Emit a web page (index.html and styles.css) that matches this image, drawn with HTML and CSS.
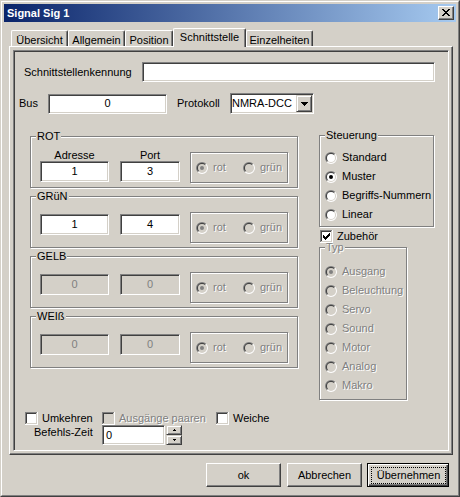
FILE: index.html
```html
<!DOCTYPE html>
<html lang="de">
<head>
<meta charset="utf-8">
<title>Signal Sig 1</title>
<link rel="stylesheet" href="styles.css">
</head>
<body>
<svg class="defs" width="0" height="0" aria-hidden="true">
  <defs>
    <symbol id="rb" viewBox="0 0 12 12">
      <path d="M1.757 10.243A6 6 0 0 1 10.243 1.757Z" fill="#808080"/>
      <path d="M10.243 1.757A6 6 0 0 1 1.757 10.243Z" fill="#ffffff"/>
      <path d="M2.464 9.536A5 5 0 0 1 9.536 2.464Z" fill="#404040"/>
      <path d="M9.536 2.464A5 5 0 0 1 2.464 9.536Z" fill="#d4d0c8"/>
      <circle cx="6" cy="6" r="4" fill="#ffffff"/>
    </symbol>
    <symbol id="rbd" viewBox="0 0 12 12">
      <path d="M1.757 10.243A6 6 0 0 1 10.243 1.757Z" fill="#808080"/>
      <path d="M10.243 1.757A6 6 0 0 1 1.757 10.243Z" fill="#ffffff"/>
      <path d="M2.464 9.536A5 5 0 0 1 9.536 2.464Z" fill="#404040"/>
      <path d="M9.536 2.464A5 5 0 0 1 2.464 9.536Z" fill="#d4d0c8"/>
      <circle cx="6" cy="6" r="4" fill="#d4d0c8"/>
    </symbol>
    <symbol id="cbx" viewBox="0 0 13 13">
      <rect width="13" height="13" fill="#ffffff"/>
      <path d="M0 0h12v1H1v11H0z" fill="#808080"/>
      <path d="M1 1h10v1H2v9H1z" fill="#404040"/>
      <path d="M11 1h1v11H1v-1h10z" fill="#d4d0c8"/>
      <rect x="2" y="2" width="9" height="9" fill="#ffffff"/>
    </symbol>
    <symbol id="cbxd" viewBox="0 0 13 13">
      <rect width="13" height="13" fill="#ffffff"/>
      <path d="M0 0h12v1H1v11H0z" fill="#808080"/>
      <path d="M1 1h10v1H2v9H1z" fill="#404040"/>
      <path d="M11 1h1v11H1v-1h10z" fill="#d4d0c8"/>
      <rect x="2" y="2" width="9" height="9" fill="#d4d0c8"/>
    </symbol>
  </defs>
</svg>

<div class="window">
  <div class="wi">
    <div class="titlebar">
      <span class="title">Signal Sig 1</span>
      <span class="tbtn"><svg class="xglyph" width="8" height="7" viewBox="0 0 8 7"><path d="M0 0h2v1H0zM6 0h2v1H6zM1 1h2v1H1zM5 1h2v1H5zM2 2h4v1H2zM3 3h2v1H3zM2 4h4v1H2zM1 5h2v1H1zM5 5h2v1H5zM0 6h2v1H0zM6 6h2v1H6z" fill="#000"/></svg></span>
    </div>

    <div class="tabs">
      <div class="tab t1">Übersicht</div>
      <div class="tab t2">Allgemein</div>
      <div class="tab t3">Position</div>
      <div class="tab t4 sel">Schnittstelle</div>
      <div class="tab t5">Einzelheiten</div>
    </div>

    <div class="panel">
      <div class="frame">
        <div class="row r1">
          <span class="lbl w-kenn">Schnittstellenkennung</span>
          <span class="edit e-kenn"></span>
        </div>
        <div class="row r2">
          <span class="lbl w-bus">Bus</span>
          <span class="edit e-bus">0</span>
          <span class="lbl w-prot">Protokoll</span>
          <span class="combo">
            <span class="combo-text">NMRA-DCC</span>
            <span class="combo-btn"><svg width="7" height="4" viewBox="0 0 7 4"><path d="M0 0h7v1H6v1H5v1H4v1H3V3H2V2H1V1H0z" fill="#000"/></svg></span>
          </span>
        </div>

        <div class="main">
          <div class="colors">
            <div class="grp g-color">
              <div class="gt">ROT</div>
              <div class="gbody">
                <div class="fcol c1 withcap"><span class="cap">Adresse</span><span class="edit e-adr">1</span></div>
                <div class="fcol c2 withcap"><span class="cap">Port</span><span class="edit e-port">3</span></div>
                <div class="rbox">
                  <span class="ri ri1 dis"><svg class="rb"><use href="#rbd"/><circle cx="6" cy="6" r="2" fill="#808080"/></svg>rot</span>
                  <span class="ri dis"><svg class="rb"><use href="#rbd"/></svg>grün</span>
                </div>
              </div>
            </div>
            <div class="grp g-color">
              <div class="gt">GRüN</div>
              <div class="gbody">
                <div class="fcol c1"><span class="edit e-adr">1</span></div>
                <div class="fcol c2"><span class="edit e-port">4</span></div>
                <div class="rbox">
                  <span class="ri ri1 dis"><svg class="rb"><use href="#rbd"/><circle cx="6" cy="6" r="2" fill="#808080"/></svg>rot</span>
                  <span class="ri dis"><svg class="rb"><use href="#rbd"/></svg>grün</span>
                </div>
              </div>
            </div>
            <div class="grp g-color">
              <div class="gt">GELB</div>
              <div class="gbody">
                <div class="fcol c1"><span class="edit e-adr off">0</span></div>
                <div class="fcol c2"><span class="edit e-port off">0</span></div>
                <div class="rbox">
                  <span class="ri ri1 dis"><svg class="rb"><use href="#rbd"/><circle cx="6" cy="6" r="2" fill="#808080"/></svg>rot</span>
                  <span class="ri dis"><svg class="rb"><use href="#rbd"/></svg>grün</span>
                </div>
              </div>
            </div>
            <div class="grp g-color">
              <div class="gt">WEIß</div>
              <div class="gbody">
                <div class="fcol c1"><span class="edit e-adr off">0</span></div>
                <div class="fcol c2"><span class="edit e-port off">0</span></div>
                <div class="rbox">
                  <span class="ri ri1 dis"><svg class="rb"><use href="#rbd"/><circle cx="6" cy="6" r="2" fill="#808080"/></svg>rot</span>
                  <span class="ri dis"><svg class="rb"><use href="#rbd"/></svg>grün</span>
                </div>
              </div>
            </div>
          </div>

          <div class="side">
            <div class="grp g-steu">
              <div class="gt">Steuerung</div>
              <div class="rlist r-steu">
                <div class="ropt"><svg class="rb"><use href="#rb"/></svg>Standard</div>
                <div class="ropt"><svg class="rb"><use href="#rb"/><circle cx="6" cy="6" r="2" fill="#000"/></svg>Muster</div>
                <div class="ropt"><svg class="rb"><use href="#rb"/></svg>Begriffs-Nummern</div>
                <div class="ropt"><svg class="rb"><use href="#rb"/></svg>Linear</div>
              </div>
            </div>
            <div class="chk zub"><svg class="cb"><use href="#cbx"/><path d="M3 5h1v3H3zM4 6h1v3H4zM5 7h1v3H5zM6 6h1v3H6zM7 5h1v3H7zM8 4h1v3H8zM9 3h1v3H9z" fill="#000"/></svg>Zubehör</div>
            <div class="grp g-typ">
              <div class="gt dis">Typ</div>
              <div class="rlist r-typ dis">
                <div class="ropt"><svg class="rb"><use href="#rbd"/><circle cx="6" cy="6" r="2" fill="#808080"/></svg>Ausgang</div>
                <div class="ropt"><svg class="rb"><use href="#rbd"/></svg>Beleuchtung</div>
                <div class="ropt"><svg class="rb"><use href="#rbd"/></svg>Servo</div>
                <div class="ropt"><svg class="rb"><use href="#rbd"/></svg>Sound</div>
                <div class="ropt"><svg class="rb"><use href="#rbd"/></svg>Motor</div>
                <div class="ropt"><svg class="rb"><use href="#rbd"/></svg>Analog</div>
                <div class="ropt"><svg class="rb"><use href="#rbd"/></svg>Makro</div>
              </div>
            </div>
          </div>
        </div>

        <div class="opts">
          <div class="chk o1"><svg class="cb"><use href="#cbx"/></svg>Umkehren</div>
          <div class="chk o2 dis"><svg class="cb"><use href="#cbxd"/></svg>Ausgänge paaren</div>
          <div class="chk o3"><svg class="cb"><use href="#cbx"/></svg>Weiche</div>
        </div>
        <div class="zeit">
          <span class="lbl w-zeit">Befehls-Zeit</span>
          <span class="edit e-zeit">0</span>
          <span class="spin">
            <span class="sbtn"><svg width="3" height="2" viewBox="0 0 3 2"><path d="M1 0h1v1h1v1H0V1h1z" fill="#000"/></svg></span>
            <span class="sbtn"><svg width="3" height="2" viewBox="0 0 3 2"><path d="M0 0h3v1H2v1H1V1H0z" fill="#000"/></svg></span>
          </span>
        </div>
      </div>
    </div>

    <div class="btns">
      <button class="btn">ok</button>
      <button class="btn">Abbrechen</button>
      <button class="btn def"><span class="focus">Übernehmen</span></button>
    </div>
  </div>
</div>
</body>
</html>
```
FILE: styles.css
```css
* { box-sizing: border-box; }
html, body { margin: 0; padding: 0; }
body {
  width: 460px;
  height: 497px;
  overflow: hidden;
  background: #d4d0c8;
  font-family: "Liberation Sans", Arial, sans-serif;
  font-size: 11px;
  line-height: 13px;
  color: #000;
}
.defs { display: block; width: 0; height: 0; overflow: hidden; }

/* window frame */
.window {
  width: 460px;
  height: 497px;
  border: 1px solid;
  border-color: #d4d0c8 #404040 #404040 #d4d0c8;
}
.wi {
  height: 100%;
  border: 1px solid;
  border-color: #fff #808080 #808080 #fff;
  padding: 2px;
  display: flex;
  flex-direction: column;
}
.titlebar {
  flex: none;
  height: 18px;
  display: flex;
  align-items: center;
  background: linear-gradient(to right, #0a246a, #a6caf0);
}
.title { padding-left: 3px; color: #fff; font-weight: bold; }
.tbtn {
  margin-left: auto;
  margin-right: 2px;
  width: 16px;
  height: 14px;
  padding: 2px 0 0 3px;
  background: #d4d0c8;
  border: 1px solid;
  border-color: #fff #404040 #404040 #fff;
  box-shadow: inset -1px -1px #808080;
}
.xglyph { display: block; }

/* tabs */
.tabs {
  flex: none;
  height: 18px;
  margin-top: 6px;
  padding-left: 7px;
  display: flex;
  align-items: flex-end;
  position: relative;
  z-index: 1;
}
.tab {
  height: 16px;
  padding-top: 3px;
  text-align: center;
  background: #d4d0c8;
  border-top: 1px solid #fff;
  border-left: 1px solid #fff;
  border-right: 1px solid #404040;
  box-shadow: inset -1px 0 #808080;
  border-radius: 2px 2px 0 0;
  white-space: nowrap;
}
.t1 { width: 57px; }
.t2 { width: 57px; }
.t3 { width: 48px; }
.t4 { width: 73px; }
.t5 { width: 67px; }
.tab.sel { height: 19px; margin-bottom: -1px; padding-top: 2px; }

/* panel */
.panel {
  flex: none;
  margin-left: 5px;
  width: 444px;
  height: 409px;
  padding: 3px;
  border: 1px solid;
  border-color: #fff #404040 #404040 #fff;
  box-shadow: inset -1px -1px #808080;
}
.frame {
  height: 100%;
  border: 1px solid;
  border-color: #808080 #fff #fff #808080;
  box-shadow: inset 1px 1px #404040, inset -1px -1px #d4d0c8;
}

/* common controls */
.edit {
  display: flex;
  align-items: center;
  justify-content: center;
  height: 20px;
  background: #fff;
  border: 1px solid;
  border-color: #808080 #fff #fff #808080;
  box-shadow: inset 1px 1px #404040, inset -1px -1px #d4d0c8;
}
.edit.off { background: #d4d0c8; color: #808080; }
.dis { color: #808080; text-shadow: 1px 1px 0 #fff; }
.lbl { flex: none; white-space: nowrap; }

.row { display: flex; align-items: center; }
.r1 { margin-top: 11px; padding-left: 10px; }
.w-kenn { width: 118px; }
.e-kenn { width: 293px; }
.r2 { margin-top: 11px; padding-left: 5px; height: 21px; }
.w-bus { width: 29px; }
.e-bus { width: 119px; }
.w-prot { width: 53px; margin-left: 10px; }

.combo {
  display: flex;
  width: 84px;
  height: 21px;
  background: #fff;
  border: 1px solid;
  border-color: #808080 #fff #fff #808080;
  box-shadow: inset 1px 1px #404040, inset -1px -1px #d4d0c8;
  padding: 1px;
}
.combo-text { flex: 1; display: flex; align-items: center; }
.combo-btn {
  width: 16px;
  display: flex;
  align-items: center;
  justify-content: center;
  background: #d4d0c8;
  border: 1px solid;
  border-color: #d4d0c8 #404040 #404040 #d4d0c8;
  box-shadow: inset 1px 1px #fff, inset -1px -1px #808080;
}
.combo-btn svg, .sbtn svg { display: block; }

/* group boxes */
.grp {
  border: 1px solid #808080;
  box-shadow: inset 1px 1px #fff, 1px 1px #fff;
}
.gt {
  display: table;
  margin: -7px 0 0 5px;
  padding: 0 1px;
  line-height: 13px;
  background: #d4d0c8;
}

.main { display: flex; align-items: flex-start; margin-top: 21px; }
.colors { width: 268px; margin-left: 16px; margin-top: 1px; }
.g-color { height: 52px; margin-bottom: 8px; }
.gbody { display: flex; align-items: flex-start; padding-left: 9px; }
.fcol { display: flex; flex-direction: column; align-items: center; margin-top: 11px; }
.fcol.withcap { margin-top: 6px; }
.cap { line-height: 12px; }
.c1 { margin-right: 11px; }
.c2 { margin-right: 10px; }
.e-adr { width: 69px; height: 21px; }
.e-port { width: 60px; height: 21px; }
.rbox {
  margin-top: 9px;
  width: 98px;
  height: 31px;
  padding-left: 5px;
  display: flex;
  align-items: center;
  border: 1px solid #808080;
  box-shadow: inset 1px 1px #fff, 1px 1px #fff;
}
.ri { display: flex; align-items: center; }
.ri1 { width: 47px; }
.rb { display: block; flex: none; width: 12px; height: 12px; margin-right: 5px; }
.cb { display: block; flex: none; width: 13px; height: 13px; margin-right: 4px; }

.side { margin-left: 21px; }
.g-steu { width: 115px; height: 92px; }
.rlist { padding-left: 5px; }
.r-steu { margin-top: 6px; }
.r-typ { margin-top: 8px; }
.ropt { height: 19px; display: flex; align-items: center; white-space: nowrap; }
.chk { display: flex; align-items: center; height: 13px; white-space: nowrap; }
.zub { margin: 3px 0 0 1px; }
.g-typ { width: 88px; height: 153px; margin-top: 4px; }

/* bottom options */
.opts { display: flex; margin-top: 12px; padding-left: 11px; }
.o1 { width: 77px; }
.o2 { width: 114px; }
.zeit { display: flex; align-items: flex-start; height: 20px; }
.w-zeit { width: 68px; margin-left: 20px; margin-top: 1px; }
.e-zeit { width: 63px; justify-content: flex-start; padding-left: 3px; }
.spin { display: flex; flex-direction: column; width: 16px; height: 20px; margin-left: 1px; }
.sbtn {
  height: 10px;
  display: flex;
  align-items: center;
  justify-content: center;
  background: #d4d0c8;
  border: 1px solid;
  border-color: #d4d0c8 #404040 #404040 #d4d0c8;
  box-shadow: inset 1px 1px #fff, inset -1px -1px #808080;
}

/* buttons */
.btns { flex: none; display: flex; justify-content: flex-end; margin-top: 8px; padding-right: 7px; }
.btn {
  font: inherit;
  color: #000;
  margin: 0;
  padding: 0;
  width: 75px;
  height: 24px;
  display: flex;
  align-items: center;
  justify-content: center;
  background: #d4d0c8;
  border: 1px solid;
  border-color: #fff #404040 #404040 #fff;
  box-shadow: inset -1px -1px #808080;
}
.btn + .btn { margin-left: 6px; }
.btn.def {
  margin-left: 5px;
  width: 82px;
  padding: 3px 2px 2px 3px;
  border-color: #000;
  box-shadow: inset 1px 1px #fff, inset -1px -1px #404040, inset -2px -2px #808080;
}
.focus {
  flex: 1;
  align-self: stretch;
  display: flex;
  align-items: center;
  justify-content: center;
  border: 1px dotted #000;
}
```
